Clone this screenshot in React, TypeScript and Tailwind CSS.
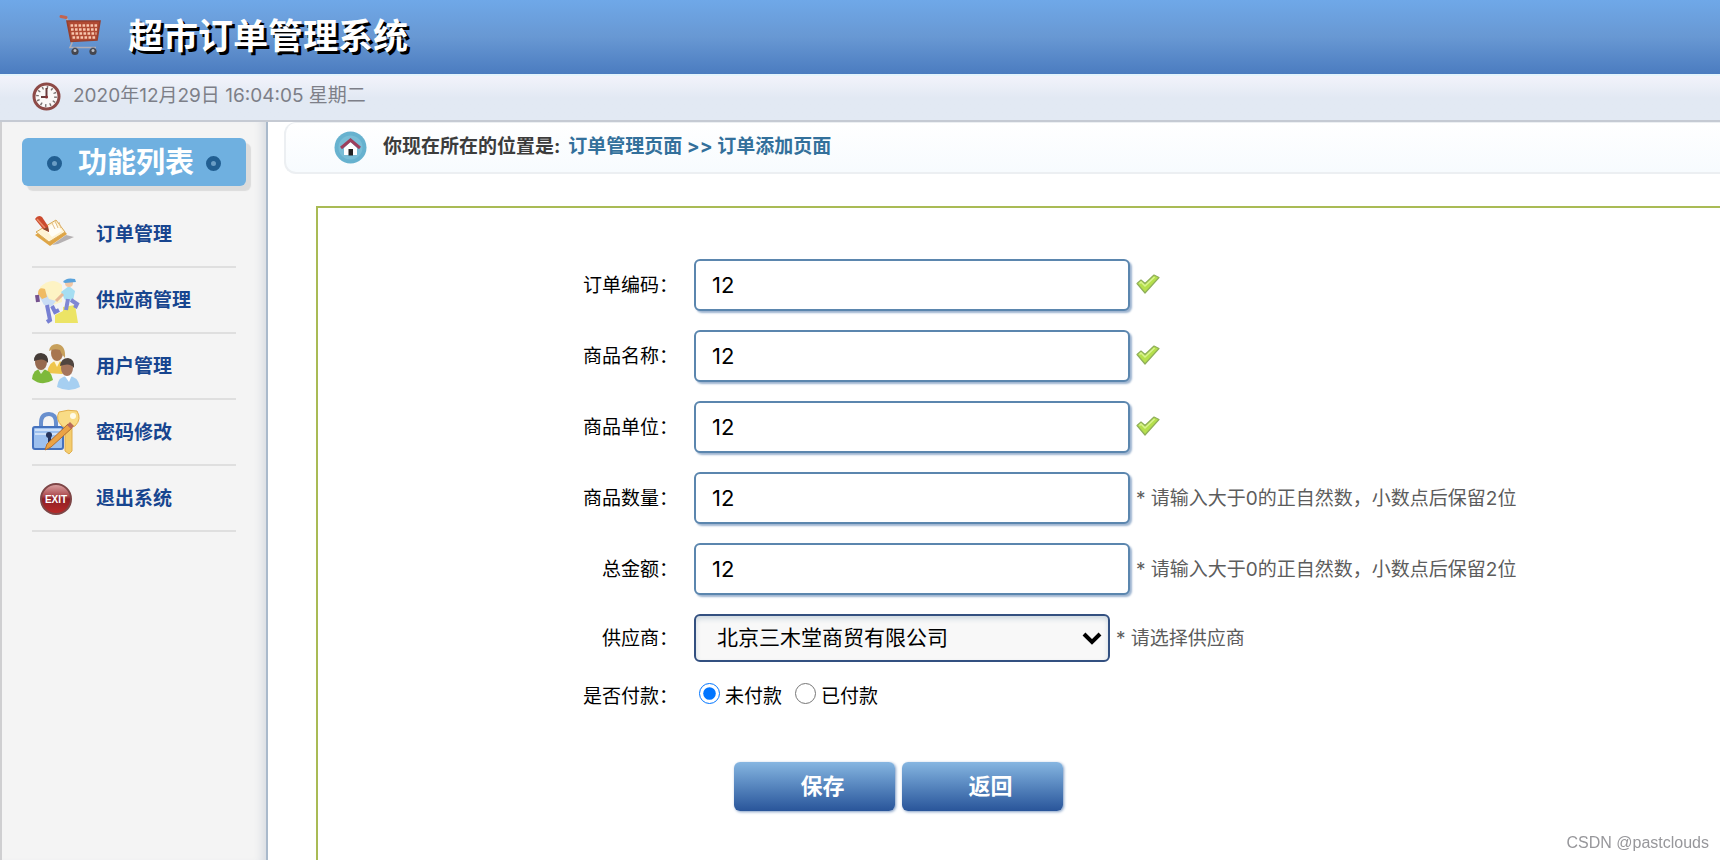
import React, { useState } from "react";

type MenuItem = { label: string; icon: React.ReactNode };
type Field = { id: string; label: string; hint?: string };

const NUMBER_HINT = "* 请输入大于0的正自然数，小数点后保留2位";

const FIELDS: Field[] = [
  { id: "billCode", label: "订单编码：" },
  { id: "productName", label: "商品名称：" },
  { id: "productUnit", label: "商品单位：" },
  { id: "productCount", label: "商品数量：", hint: NUMBER_HINT },
  { id: "totalPrice", label: "总金额：", hint: NUMBER_HINT },
];

const CartIcon = () => (
  <svg className="h-[45px] w-[44px] shrink-0" viewBox="0 0 44 45" fill="none">
    <path d="M3 3 L8 4 Q9.500 5 10 7 L14 29 L12 33.500 L38 33.500" stroke="#b0adb6" strokeWidth="1.600" />
    <path d="M3 2.500 L8 3.500" stroke="#c2644f" strokeWidth="3" strokeLinecap="round" />
    <path d="M9 7 L42 7 L39 26 L13 27.500 Z" fill="#b04a33" />
    <path d="M12.500 11.500 H39.500 M13 15.500 H39 M13.500 19.500 H38.500 M14.500 23.500 H38" stroke="#f8c6ae" strokeWidth="2.400" strokeDasharray="2.600 1.400" />
    <path d="M9 7 L42 7 L39 26 L13 27.500 Z" stroke="#96402f" strokeWidth="1.600" />
    <path d="M17 33v4M35 33v4" stroke="#8f909b" strokeWidth="3" />
    <circle cx="17" cy="37.500" r="3.600" fill="#45464e" />
    <circle cx="17" cy="36.500" r="1.500" fill="#b9bcc5" />
    <circle cx="35" cy="37.500" r="3.600" fill="#45464e" />
    <circle cx="35" cy="36.500" r="1.500" fill="#b9bcc5" />
  </svg>
);

const ClockIcon = () => (
  <svg className="size-[29px] shrink-0" viewBox="0 0 29 29" fill="none">
    <circle cx="14.500" cy="14.500" r="12.500" fill="#fbf8f7" stroke="#8d4a47" strokeWidth="3" />
    <circle cx="14.500" cy="14.500" r="9" stroke="#77706f" strokeWidth="2.800" strokeDasharray="1.400 3.312" />
    <path d="M14.500 6v9H9" stroke="#6a3b3c" strokeWidth="2" />
    <circle cx="14.500" cy="15" r="1.500" fill="#8a3032" />
  </svg>
);

const HomeIcon = () => (
  <svg className="size-[33px] shrink-0" viewBox="0 0 33 33" fill="none">
    <circle cx="16.500" cy="16.500" r="16" fill="#67b2cf" />
    <circle cx="16.500" cy="16.500" r="12" fill="#79bdd6" />
    <path d="M10 17 L16.500 11 L23 17 V24 H10Z" fill="#fff" />
    <path d="M7 17 L16.500 9 L26 17" stroke="#9e3f5c" strokeWidth="3" />
    <rect x="14.500" y="18" width="4.500" height="6.500" fill="#222" />
  </svg>
);

const OrderIcon = () => (
  <svg className="size-12" viewBox="0 0 48 48" fill="none">
    <path d="M20 34 L34 24 L42 26 L26 33Z" fill="#b5b1b2" />
    <path d="M3 24 L24 11 L35 23 L18 35Z" fill="#dfa545" />
    <path d="M4 21 L24 9 L33 21 L17 31Z" fill="#fff3d3" stroke="#d9aa57" />
    <path d="M13 18 L23 12 L30 20 L20 26Z" fill="#fffdf6" />
    <path d="M20 12l3 6M23 10l3 7M27 11l2 6" stroke="#e3bd84" />
    <path d="M3 8 Q6 3 10 6 L16 15 L17 21 L11 18Z" fill="#cb4a2e" />
    <path d="M5 8 L13 17" stroke="#e88b67" strokeWidth="1.500" />
    <path d="M11 18l5 -2 1 5Z" fill="#8b4a32" />
  </svg>
);

const SupplierIcon = () => (
  <svg className="size-12" viewBox="0 0 48 48" fill="none">
    <path d="M8 10 Q20 -1 30 8 L30 25 L14 30Z" fill="#fdf3c4" />
    <path d="M23 46 V38 L31 34 V30 L43 28 L46 46Z" fill="#ece465" />
    <path d="M6 17 L12 12 L17 22 L24 24 L20 29 L12 28Z" fill="#c9ddf5" />
    <path d="M6 17 Q6 9 13 12 L15 20 L10 22Z" fill="#f0bb62" />
    <path d="M5 18 L6 25" stroke="#75528f" strokeWidth="4" />
    <path d="M15 28 L18 43 L15 45 M20 29 L23 35 L27 33" stroke="#7780d3" strokeWidth="4" />
    <path d="M29 15 L37 9 L43 14 L41 24 L33 23Z" fill="#a5def2" />
    <path d="M31 17 L24 24" stroke="#e7b998" strokeWidth="3" />
    <circle cx="37" cy="6" r="4" fill="#f0c7a6" />
    <path d="M31 5 Q34 0 43 2 L44 5 L33 6Z" fill="#5aa3dc" />
    <path d="M36 22 L34 33 M39 23 L45 27 L43 31" stroke="#8088d3" strokeWidth="4" />
  </svg>
);

const UsersIcon = () => (
  <svg className="size-12" viewBox="0 0 48 48" fill="none">
    <path d="M15 30 Q17 18 25 18 Q33 18 35 27 L30 31Z" fill="#efc64c" />
    <path d="M22 18 L25 24 L28 18Z" fill="#fff6d8" />
    <ellipse cx="25" cy="10" rx="6" ry="8" fill="#a87650" />
    <path d="M17 8 Q18 1 25 1 Q34 2 33 15 Q29 11 28 7 Q22 5 17 8Z" fill="#c7a05c" />
    <path d="M0 36 Q1 26 9 26 Q19 26 21 37 Q10 44 0 36Z" fill="#7db93b" />
    <path d="M6 26 L9 31 L13 26Z" fill="#e5efda" />
    <ellipse cx="9" cy="19" rx="6" ry="8" fill="#96694f" />
    <path d="M2 18 Q2 10 9 10 Q17 11 16 20 Q12 14 2 18Z" fill="#453c37" />
    <path d="M25 44 Q26 33 36 33 Q46 33 48 44 Q37 50 25 44Z" fill="#a6cff1" />
    <path d="M32 32 L37 39 L40 32Z" fill="#fff" />
    <ellipse cx="35" cy="25" rx="6" ry="8" fill="#a5755c" />
    <path d="M28 23 Q29 15 36 15 Q43 16 42 25 Q38 19 28 23Z" fill="#50453f" />
  </svg>
);

const PasswordIcon = () => (
  <svg className="size-12" viewBox="0 0 48 48" fill="none">
    <path d="M9 18 V14 Q9 5 17 5 Q24 5 24 14 V18" stroke="#688fce" strokeWidth="4" />
    <rect x="1" y="18" width="30" height="22" rx="2" fill="#9dc0ee" stroke="#4471bd" strokeWidth="2" />
    <path d="M3 21h26M3 25h26" stroke="#cfe1f8" strokeWidth="2" />
    <path d="M33 16 V42 L37 45 L40 42 V16Z" fill="#f4cc6c" stroke="#dfae50" />
    <path d="M27 3 Q36 0 45 2 Q50 10 43 17 Q35 21 30 17 Q23 10 27 3Z" fill="#f9dc86" stroke="#e2af4d" />
    <circle cx="41" cy="7" r="3" fill="#fffbe8" />
    <circle cx="17" cy="26" r="3" fill="#26345c" />
    <path d="M16 27h3v8h-3Z" fill="#26345c" />
    <path d="M15 35 L36 15 L40 19 L19 38 L13 41Z" fill="#eba345" stroke="#b56e2e" />
    <path d="M35 16l3-3 4 4-3 3Z" fill="#b8695a" />
  </svg>
);

const ExitIcon = () => (
  <svg className="size-12" viewBox="0 0 48 48" fill="none">
    <defs>
      <linearGradient id="exit" x1="0" y1="0" x2="0" y2="1">
        <stop stopColor="#dda6a6" />
        <stop offset="0.400" stopColor="#ab4a4e" />
        <stop offset="0.500" stopColor="#8d1f25" />
        <stop offset="1" stopColor="#bb2a28" />
      </linearGradient>
    </defs>
    <circle cx="24" cy="24" r="15" fill="url(#exit)" stroke="#7d4546" strokeWidth="2" />
    <text x="24" y="28" textAnchor="middle" fill="#fff" fontSize="10" fontWeight="700" fontFamily="Liberation Sans, sans-serif">
      EXIT
    </text>
  </svg>
);

const CheckIcon = () => (
  <svg className="mb-[5px] h-5 w-6 shrink-0" viewBox="0 0 24 20" fill="none">
    <path d="M1 9.500 L5 6 L9 9.500 L18 1 L23 3.500 L9 19 Z" fill="#b5e04c" stroke="#8fae5a" strokeWidth="1.200" strokeLinejoin="round" />
    <path d="M3.500 9.500 L5 8 L9 12 L18.500 3" stroke="#d9f391" strokeWidth="1.500" />
  </svg>
);

const MENU: MenuItem[] = [
  { label: "订单管理", icon: <OrderIcon /> },
  { label: "供应商管理", icon: <SupplierIcon /> },
  { label: "用户管理", icon: <UsersIcon /> },
  { label: "密码修改", icon: <PasswordIcon /> },
  { label: "退出系统", icon: <ExitIcon /> },
];

const Dot = () => (
  <span className="size-[15px] rounded-full border-[5px] border-[#225f92] bg-[#6b9dc4]"></span>
);

const Header = () => (
  <header>
    <div className="flex h-[74px] items-center bg-linear-to-b from-[#6fa8e8] via-[#6898d3] to-[#4b7cc0] pb-[2px] pl-[58px]">
      <CartIcon />
      <h1 className="ml-[26px] text-[35px] leading-[44px] font-bold text-white [text-shadow:3px_3px_0_#000]">
        超市订单管理系统
      </h1>
    </div>
    <div className="flex h-12 items-center border-t-2 border-b-2 border-t-[#e4f4fc] border-b-[#c5cad3] bg-linear-to-b from-[#f2f3fb] to-[#e2e9f3] to-50% pb-1 pl-8 text-[19px] text-[#7d7f88]">
      <ClockIcon />
      <span className="ml-3">2020年12月29日 16:04:05 星期二</span>
    </div>
  </header>
);

const Sidebar = () => (
  <aside className="w-[268px] shrink-0 border-r-2 border-l-2 border-l-[#cfcfd1] border-r-[#a9b9cb] bg-[#f4f4f4] pt-4 shadow-[inset_-10px_0_8px_-6px_#d8dce2]">
    <h2 className="ml-5 flex h-12 w-56 items-center justify-center gap-3 rounded-md bg-[#6fb0e0] pt-[2px] text-[29px] font-bold text-white shadow-[5px_5px_1px_#dcdcdc]">
      <Dot />
      <span className="ml-1">功能列表</span>
      <Dot />
    </h2>
    <nav className="mt-4 ml-[30px] w-[204px]">
      {MENU.map((item) => (
        <a
          key={item.label}
          href="#"
          className="flex h-[66px] items-center gap-4 border-b-2 border-[#dfdfdf] pt-[2px] text-[19px] font-bold text-[#17458f]"
        >
          {item.icon}
          {item.label}
        </a>
      ))}
    </nav>
  </aside>
);

const OrderForm = () => {
  const [values, setValues] = useState<Record<string, string>>({
    billCode: "12",
    productName: "12",
    productUnit: "12",
    productCount: "12",
    totalPrice: "12",
  });
  const [isPayment, setIsPayment] = useState<number>(1);

  return (
    <form className="mt-8 ml-[48px] grow border-t-2 border-l-2 border-[#a9bb55] pt-[51px] text-[19px] text-black">
      <div className="flex flex-col gap-[19px]">
        {FIELDS.map((field) => (
          <div key={field.id} className="flex items-center">
            <label htmlFor={field.id} className="mr-4 w-[360px] pt-[3px] text-right">
              {field.label}
            </label>
            <input
              id={field.id}
              type="text"
              className="h-[52px] w-[436px] rounded-md border-2 border-[#5b86ae] bg-white px-4 text-[22px] shadow-[2px_2px_2px_#9db4d0] outline-none"
              value={values[field.id]}
              onChange={(e) => {
                setValues({ ...values, [field.id]: e.target.value });
              }}
            />
            <span className="ml-[6px] pt-[3px] text-[#5c5c5c]">
              {field.hint || <CheckIcon />}
            </span>
          </div>
        ))}
        <div className="flex items-center">
          <label htmlFor="providerId" className="mr-4 w-[360px] pt-[3px] text-right">
            供应商：
          </label>
          <div className="relative">
            <select
              id="providerId"
              className="h-12 w-[416px] appearance-none rounded-md border-2 border-[#335080] bg-[#f8f8f8] px-[21px] text-[21px] shadow-[inset_0_3px_5px_#cfd9e0] outline-none"
            >
              <option>北京三木堂商贸有限公司</option>
            </select>
            <svg className="pointer-events-none absolute top-[17px] right-2 h-[14px] w-5" viewBox="0 0 20 14" fill="none">
              <path d="M2 3l8 8 8-8" stroke="#000" strokeWidth="4" />
            </svg>
          </div>
          <span className="ml-[6px] pt-[3px] text-[#5c5c5c]">* 请选择供应商</span>
        </div>
      </div>

      <div className="mt-[21px] flex items-center">
        <span className="mr-4 w-[360px] text-right">是否付款：</span>
        <label className="ml-[5px] flex items-center gap-[5px]">
          <input
            type="radio"
            name="isPayment"
            className="mb-2 size-[21px]"
            checked={isPayment === 1}
            onChange={() => setIsPayment(1)}
          />
          未付款
        </label>
        <label className="ml-[13px] flex items-center gap-[5px]">
          <input
            type="radio"
            name="isPayment"
            className="mb-2 size-[21px]"
            checked={isPayment === 2}
            onChange={() => setIsPayment(2)}
          />
          已付款
        </label>
      </div>

      <div className="mt-[50px] ml-[416px] flex gap-[7px] text-[22px] font-bold text-white">
        <button
          type="button"
          className="h-[49px] w-[161px] rounded-md bg-linear-to-b from-[#86b6e1] to-[#29559a] pl-4 shadow-[1px_1px_3px_#7f9cc4]"
        >
          保存
        </button>
        <button
          type="button"
          className="h-[49px] w-[161px] rounded-md bg-linear-to-b from-[#86b6e1] to-[#29559a] pl-4 shadow-[1px_1px_3px_#7f9cc4]"
        >
          返回
        </button>
      </div>
    </form>
  );
};

const App = () => {
  return (
    <div className="flex min-h-screen flex-col bg-white pr-1 font-['Inter','Noto_Sans_CJK_SC',sans-serif]">
      <Header />
      <div className="flex grow">
        <Sidebar />
        <main className="flex grow flex-col">
          <div className="ml-4 flex h-[52px] items-center rounded-l-xl border-2 border-t border-r-0 border-[#eceff2] bg-linear-to-b from-white to-[#f7fbfe] pl-[48px] text-[19px] font-bold text-[#3c3c3c]">
            <HomeIcon />
            <span className="ml-4">你现在所在的位置是:</span>
            <span className="ml-2 text-[#33709b]">订单管理页面 &gt;&gt; 订单添加页面</span>
          </div>
          <OrderForm />
        </main>
      </div>
      <span className="fixed right-[15px] bottom-[5px] font-['Liberation_Sans',sans-serif] text-base text-[#97979b]">
        CSDN @pastclouds
      </span>
    </div>
  );
};

export default App;
